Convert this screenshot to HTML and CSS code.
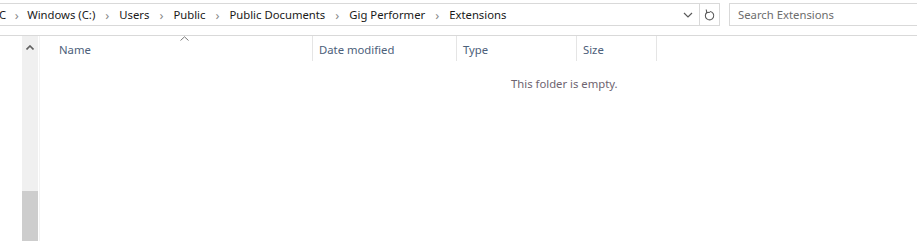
FILE: index.html
```html
<!DOCTYPE html>
<html lang="en">
<head>
    <meta charset="UTF-8">
    <title>Extensions</title>
    <link rel="stylesheet" href="styles.css">
</head>
<body>
    <div class="toolbar">
        <div class="address-bar">
            <div class="crumbs">
                <span class="crumb cut">C</span>
                <span class="sep first">&#8250;</span>
                <span class="crumb">Windows (C:)</span>
                <span class="sep">&#8250;</span>
                <span class="crumb">Users</span>
                <span class="sep">&#8250;</span>
                <span class="crumb">Public</span>
                <span class="sep">&#8250;</span>
                <span class="crumb">Public Documents</span>
                <span class="sep">&#8250;</span>
                <span class="crumb">Gig Performer</span>
                <span class="sep">&#8250;</span>
                <span class="crumb">Extensions</span>
            </div>
            <div class="dropdown">
                <svg width="10" height="6" viewBox="0 0 10 6"><path d="M1 1 L5 5 L9 1" fill="none" stroke="#5a5a5a" stroke-width="1.2"/></svg>
            </div>
            <div class="refresh">
                <svg width="12" height="14" viewBox="0 0 12 14"><path d="M3.2 4.2 A4.2 4.2 0 1 0 6 3.5" fill="none" stroke="#5a5a5a" stroke-width="1.1"/><path d="M2.2 1.5 L2.8 4.6 L6 4.2" fill="none" stroke="#5a5a5a" stroke-width="1.1"/></svg>
            </div>
        </div>
        <div class="search">Search Extensions</div>
    </div>

    <div class="main">
        <div class="nav-scroll">
            <div class="scroll-up">
                <svg width="8" height="5" viewBox="0 0 8 5"><path d="M0.5 4.5 L4 1 L7.5 4.5" fill="none" stroke="#606060" stroke-width="1.6"/></svg>
            </div>
            <div class="scroll-track"></div>
            <div class="scroll-thumb"></div>
        </div>
        <div class="splitter"></div>
        <div class="content">
            <div class="columns">
                <div class="col col-name">
                    Name
                    <svg class="sort" width="9" height="5" viewBox="0 0 9 5"><path d="M0.5 4.5 L4.5 0.8 L8.5 4.5" fill="none" stroke="#7a7a7a" stroke-width="1"/></svg>
                </div>
                <div class="col col-date">Date modified</div>
                <div class="col col-type">Type</div>
                <div class="col col-size">Size</div>
            </div>
            <div class="empty">This folder is empty.</div>
        </div>
    </div>
</body>
</html>
```

FILE: styles.css
```css
body {
    margin: 0;
    width: 917px;
    height: 241px;
    overflow: hidden;
    background: #fff;
    font-family: "Noto Sans", "Open Sans", sans-serif;
    font-size: 11.3px;
    color: #1a1a1a;
}

.toolbar {
    display: flex;
    height: 36px;
    padding-top: 3px;
    box-sizing: border-box;
    border-bottom: 1px solid #d9d9d9;
}

.address-bar {
    display: flex;
    width: 720px;
    height: 23px;
    box-sizing: border-box;
    border: 1px solid #d9d9d9;
    border-left: none;
}

.crumbs {
    flex: 1;
    display: flex;
    align-items: center;
    margin-left: -1px;
    white-space: nowrap;
}

.sep {
    width: 24px;
    text-align: center;
    color: #8a8a8a;
    font-size: 13px;
    line-height: 12px;
}

.sep.first {
    width: 21px;
}

.dropdown {
    width: 23px;
    display: flex;
    align-items: center;
    justify-content: center;
    padding-top: 1px;
}

.refresh {
    width: 19px;
    display: flex;
    align-items: center;
    justify-content: center;
    border-left: 1px solid #d9d9d9;
}

.search {
    flex: 1;
    margin-left: 9px;
    height: 23px;
    box-sizing: border-box;
    border: 1px solid #d9d9d9;
    border-right: none;
    padding: 0 0 0 8px;
    line-height: 21px;
    color: #6d6d6d;
}

.main {
    display: flex;
    height: 205px;
}

.nav-scroll {
    margin-left: 22px;
    width: 16px;
    display: flex;
    flex-direction: column;
    background: #f0f0f0;
}

.scroll-up {
    height: 21px;
    display: flex;
    align-items: center;
    justify-content: center;
    padding-top: 1px;
}

.scroll-track {
    flex: 1;
}

.scroll-thumb {
    height: 50px;
    background: #cdcdcd;
}

.splitter {
    width: 1px;
    margin-left: 1px;
    background: #f3f3f3;
}

.content {
    flex: 1;
}

.columns {
    display: flex;
    height: 25px;
    color: #4c607a;
}

.col {
    position: relative;
    display: flex;
    align-items: center;
    padding-left: 6px;
    padding-top: 2px;
    box-sizing: border-box;
    border-right: 1px solid #e5e5e5;
}

.col-name {
    width: 273px;
    padding-left: 19px;
}

.col-date {
    width: 144px;
}

.col-type {
    width: 120px;
}

.col-size {
    width: 80px;
}

.sort {
    position: absolute;
    left: 140px;
    top: 0;
}

.empty {
    margin-top: 15px;
    margin-left: 471px;
    color: #6e6470;
}
```
